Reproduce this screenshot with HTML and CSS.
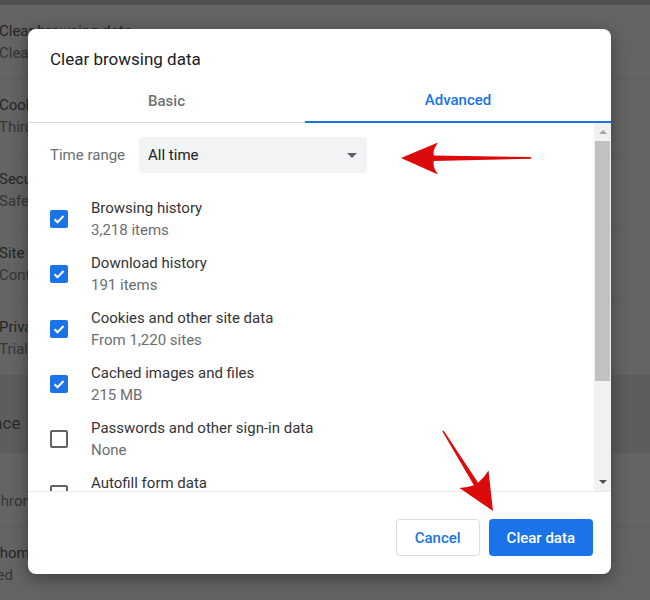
FILE: index.html
```html
<!DOCTYPE html>
<html lang="en">

<head>
    <meta charset="UTF-8">
    <meta name="viewport" content="width=device-width, initial-scale=1.0">
    <title>Clear browsing data</title>
    <link rel="stylesheet" href="styles.css">
</head>

<body>
    <div class="settings">
        <div class="top-strip"></div>
        <div class="card">
            <div class="row">
                <div class="row-title">Clear browsing data</div>
                <div class="row-sub">Clear history, cookies, cache, and more</div>
            </div>
            <div class="row">
                <div class="row-title">Cookies and other site data</div>
                <div class="row-sub">Third-party cookies are blocked in Incognito mode</div>
            </div>
            <div class="row">
                <div class="row-title">Security</div>
                <div class="row-sub">Safe Browsing (protection from dangerous sites)</div>
            </div>
            <div class="row">
                <div class="row-title">Site Settings</div>
                <div class="row-sub">Controls what information sites can use and show</div>
            </div>
            <div class="row">
                <div class="row-title">Privacy Sandbox</div>
                <div class="row-sub">Trial features are on</div>
            </div>
        </div>
        <div class="section-title">Appearance</div>
        <div class="card">
            <div class="row single">
                <div class="row-sub shift-chrome">Chrome Colors</div>
            </div>
            <div class="row">
                <div class="row-title shift-home">Show home button</div>
                <div class="row-sub shift-disabled">Disabled</div>
            </div>
        </div>
    </div>

    <div class="dialog">
        <div class="dialog-title">Clear browsing data</div>
        <div class="tabs">
            <div class="tab basic">Basic</div>
            <div class="tab active">Advanced</div>
        </div>

        <div class="dialog-body">
            <div class="content">
                <div class="time-range">
                    <span class="time-label">Time range</span>
                    <div class="select">
                        <span>All time</span>
                        <span class="caret"></span>
                    </div>
                </div>

                <div class="option">
                    <div class="checkbox checked">
                        <svg width="18" height="18" viewBox="0 0 18 18"><path d="M4.5 9.2l3 3 6-6.2" fill="none" stroke="#fff" stroke-width="2"/></svg>
                    </div>
                    <div>
                        <div class="option-title">Browsing history</div>
                        <div class="option-sub">3,218 items</div>
                    </div>
                </div>
                <div class="option">
                    <div class="checkbox checked">
                        <svg width="18" height="18" viewBox="0 0 18 18"><path d="M4.5 9.2l3 3 6-6.2" fill="none" stroke="#fff" stroke-width="2"/></svg>
                    </div>
                    <div>
                        <div class="option-title">Download history</div>
                        <div class="option-sub">191 items</div>
                    </div>
                </div>
                <div class="option">
                    <div class="checkbox checked">
                        <svg width="18" height="18" viewBox="0 0 18 18"><path d="M4.5 9.2l3 3 6-6.2" fill="none" stroke="#fff" stroke-width="2"/></svg>
                    </div>
                    <div>
                        <div class="option-title">Cookies and other site data</div>
                        <div class="option-sub">From 1,220 sites</div>
                    </div>
                </div>
                <div class="option">
                    <div class="checkbox checked">
                        <svg width="18" height="18" viewBox="0 0 18 18"><path d="M4.5 9.2l3 3 6-6.2" fill="none" stroke="#fff" stroke-width="2"/></svg>
                    </div>
                    <div>
                        <div class="option-title">Cached images and files</div>
                        <div class="option-sub">215 MB</div>
                    </div>
                </div>
                <div class="option">
                    <div class="checkbox"></div>
                    <div>
                        <div class="option-title">Passwords and other sign-in data</div>
                        <div class="option-sub">None</div>
                    </div>
                </div>
                <div class="option">
                    <div class="checkbox"></div>
                    <div>
                        <div class="option-title">Autofill form data</div>
                        <div class="option-sub">None</div>
                    </div>
                </div>
                <div class="option">
                    <div class="checkbox"></div>
                    <div>
                        <div class="option-title">Site settings</div>
                        <div class="option-sub">None</div>
                    </div>
                </div>
            </div>

            <div class="scrollbar">
                <div class="scroll-btn"><span class="arrow-up"></span></div>
                <div class="scroll-thumb"></div>
                <div class="scroll-space"></div>
                <div class="scroll-btn"><span class="arrow-down"></span></div>
            </div>
        </div>

        <div class="dialog-footer">
            <button class="btn btn-cancel">Cancel</button>
            <button class="btn btn-primary">Clear data</button>
        </div>
    </div>

    <!-- red annotation arrows drawn over the screenshot -->
    <svg class="annotations" width="650" height="600" viewBox="0 0 650 600">
        <path d="M401 158 L438 142.5 Q432 151 434 155.5 L531 157 L531 158.8 L434 161 Q432 166 438 174.5 Z" fill="#dc0a0a"/>
        <path d="M493 511 L459.5 488 Q468 487.5 473.9 485.3 L442.4 431.4 L443.6 430.6 L478.1 482.7 Q484 478 488.5 470.5 Z" fill="#dc0a0a"/>
    </svg>
</body>

</html>
```

FILE: styles.css
```css
body {
    font-family: Roboto, "Liberation Sans", sans-serif;
    margin: 0;
    padding: 0;
    width: 650px;
    height: 600px;
    overflow: hidden;
    position: relative;
    background: #5d5d5d;
}

/* dimmed settings page behind the dialog */
.top-strip {
    height: 5px;
    background: #505050;
}

.card {
    background: #646464;
}

.row {
    padding: 14px 0 15px;
    border-top: 1px solid #5f5f5f;
    margin-left: -1px;
    font-size: 15px;
    line-height: 22px;
}

.row:first-child {
    padding-top: 15px;
    border-top: none;
}

.row.single {
    padding: 37px 0 15px;
}

.row-title {
    color: #262626;
    white-space: nowrap;
}

.row-sub {
    color: #363636;
    white-space: nowrap;
}

.shift-chrome {
    margin-left: -8px;
}

.shift-home {
    margin-left: -40px;
}

.shift-disabled {
    margin-left: -44px;
}

.section-title {
    padding: 37px 0 19px;
    margin-left: -70px;
    font-size: 17px;
    line-height: 22px;
    color: #2a2a2a;
    white-space: nowrap;
}

/* dialog */
.dialog {
    position: absolute;
    left: 28px;
    top: 29px;
    width: 583px;
    height: 545px;
    background: #fff;
    border-radius: 8px;
    box-shadow: 0 4px 18px rgba(0, 0, 0, 0.4);
    display: flex;
    flex-direction: column;
    overflow: hidden;
}

.dialog-title {
    padding: 20px 22px 10px;
    font-size: 17px;
    line-height: 20px;
    color: #202124;
}

.tabs {
    display: flex;
    height: 44px;
    box-sizing: border-box;
    border-bottom: 1px solid #dadce0;
}

.tab {
    flex: 1;
    display: flex;
    align-items: center;
    justify-content: center;
    font-size: 15px;
    font-weight: 500;
    color: #6e7175;
}

.tab.basic {
    flex: 0 0 277px;
}

.tab.active {
    color: #1a73e8;
    border-bottom: 2px solid #1a73e8;
    margin-bottom: -1px;
}

.dialog-body {
    flex: 1;
    display: flex;
    min-height: 0;
}

.content {
    flex: 1;
    overflow: hidden;
    padding: 14px 0 0 22px;
}

.time-range {
    display: flex;
    align-items: center;
    gap: 14px;
    margin-bottom: 19px;
}

.time-label {
    font-size: 15px;
    color: #6b6e72;
}

.select {
    width: 228px;
    height: 36px;
    box-sizing: border-box;
    padding: 0 10px 0 9px;
    background: #f1f3f4;
    border-radius: 4px;
    display: flex;
    align-items: center;
    justify-content: space-between;
    font-size: 15px;
    color: #202124;
}

.caret {
    width: 0;
    height: 0;
    border-left: 5px solid transparent;
    border-right: 5px solid transparent;
    border-top: 5px solid #5f6368;
}

.option {
    display: flex;
    align-items: center;
    padding: 5px 0 6px;
}

.checkbox {
    width: 18px;
    height: 18px;
    box-sizing: border-box;
    border: 2px solid #5f6368;
    border-radius: 2px;
    margin-right: 23px;
    flex-shrink: 0;
}

.checkbox.checked {
    border: none;
    background: #1a73e8;
}

.checkbox svg {
    display: block;
}

.option-title {
    font-size: 15px;
    line-height: 22px;
    color: #333437;
}

.option-sub {
    font-size: 15px;
    line-height: 22px;
    color: #6b6e72;
}

.scrollbar {
    width: 17px;
    background: #f1f1f1;
    display: flex;
    flex-direction: column;
}

.scroll-btn {
    height: 18px;
    display: flex;
    align-items: center;
    justify-content: center;
}

.arrow-up {
    border-left: 4px solid transparent;
    border-right: 4px solid transparent;
    border-bottom: 4px solid #a3a3a3;
}

.arrow-down {
    border-left: 4px solid transparent;
    border-right: 4px solid transparent;
    border-top: 4px solid #505050;
}

.scroll-thumb {
    height: 240px;
    margin: 0 1px;
    background: #c1c1c1;
}

.scroll-space {
    flex: 1;
}

.dialog-footer {
    height: 83px;
    box-sizing: border-box;
    border-top: 1px solid #e8eaed;
    display: flex;
    justify-content: flex-end;
    align-items: flex-start;
    gap: 9px;
    padding: 27px 18px 0 0;
}

.btn {
    height: 37px;
    border-radius: 4px;
    font-family: Roboto, "Liberation Sans", sans-serif;
    font-size: 15px;
    font-weight: 500;
    cursor: pointer;
}

.btn-cancel {
    padding: 0 18px;
    background: #fff;
    border: 1px solid #dadce0;
    color: #1a73e8;
}

.btn-primary {
    padding: 0 18px;
    background: #1a73e8;
    border: none;
    color: #fff;
}

.annotations {
    position: absolute;
    left: 0;
    top: 0;
    pointer-events: none;
}
```
